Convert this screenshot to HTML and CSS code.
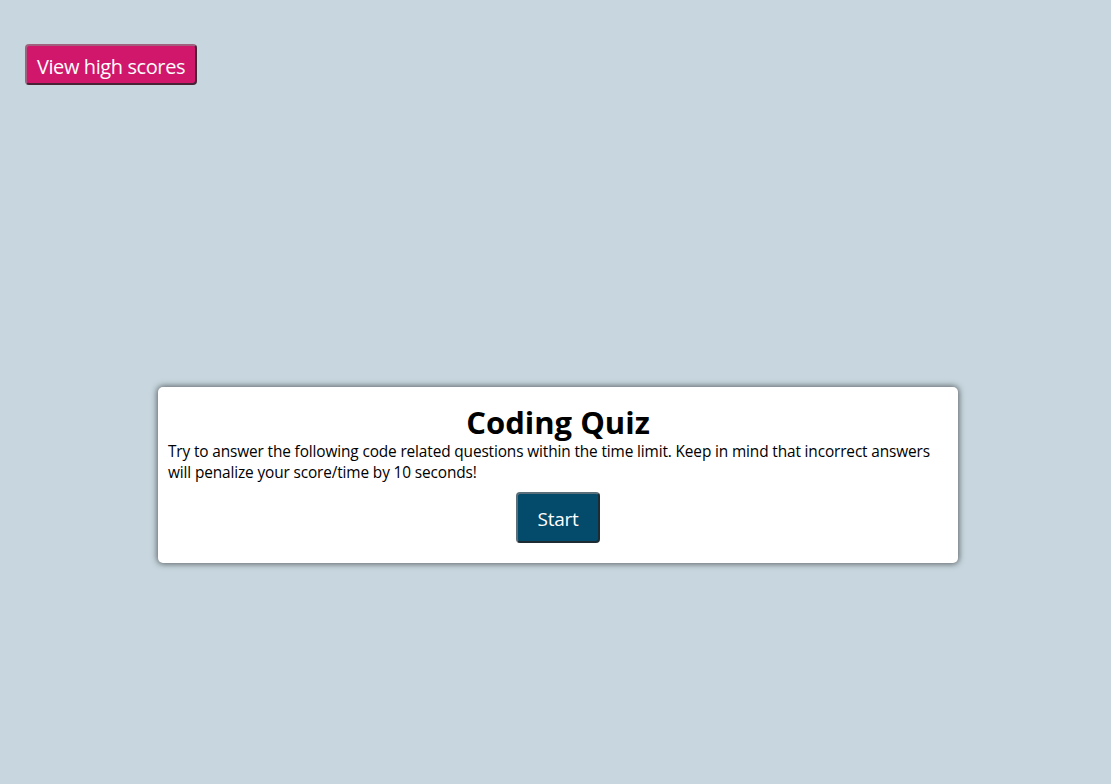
FILE: index.html
```html
<!DOCTYPE html>
<html>
<head>
<meta charset="utf-8">
<link rel="stylesheet" href="styles.css">
</head>
<body>
<header class="top">
  <button class="scores-btn">View high scores</button>
</header>
<main class="stage">
  <section class="card">
    <h1 class="title">Coding Quiz</h1>
    <p class="intro">Try to answer the following code related questions within the time limit. Keep in mind that incorrect answers will penalize your score/time by 10 seconds!</p>
    <div class="actions">
      <button class="start-btn">Start</button>
    </div>
  </section>
</main>
</body>
</html>
```
FILE: styles.css
```css
html, body {
  margin: 0;
  padding: 0;
  background: #c8d7df;
  font-family: "Open Sans", "Noto Sans", sans-serif;
  color: #000;
}
body {
  height: 784px;
  overflow: hidden;
}
.top {
  padding: 44px 0 0 25px;
}
.scores-btn {
  font-family: inherit;
  font-size: 20px;
  color: #fff;
  background: #d0176c;
  border: 2px solid #4a2236;
  border-top-color: #a0607e;
  border-left-color: #a0607e;
  border-radius: 4px;
  padding: 4px 0 0;
  height: 41px;
  width: 172px;
  line-height: 1;
  letter-spacing: -0.4px;
}
.stage {
  display: flex;
  justify-content: center;
  padding: 302px 0 0 5px;
}
.card {
  width: 780px;
  background: #fff;
  border-radius: 5px;
  box-shadow: 0 0 6px 1px rgba(0,0,0,0.55);
  padding: 16px 10px 20px;
}
.title {
  margin: 0;
  text-align: center;
  font-size: 31px;
  font-weight: 700;
  line-height: 38px;
  letter-spacing: 0;
}
.intro {
  margin: 0;
  font-size: 15.4px;
  line-height: 21px;
  letter-spacing: -0.13px;
}
.actions {
  display: flex;
  justify-content: center;
  margin-top: 9px;
}
.start-btn {
  font-family: inherit;
  font-size: 19px;
  color: #fff;
  background: #034a6b;
  border: 2px solid #1d2b33;
  border-top-color: #5a6f7a;
  border-left-color: #5a6f7a;
  border-radius: 4px;
  width: 84px;
  height: 51px;
  padding: 2px 0 0;
  letter-spacing: -0.3px;
}
```
